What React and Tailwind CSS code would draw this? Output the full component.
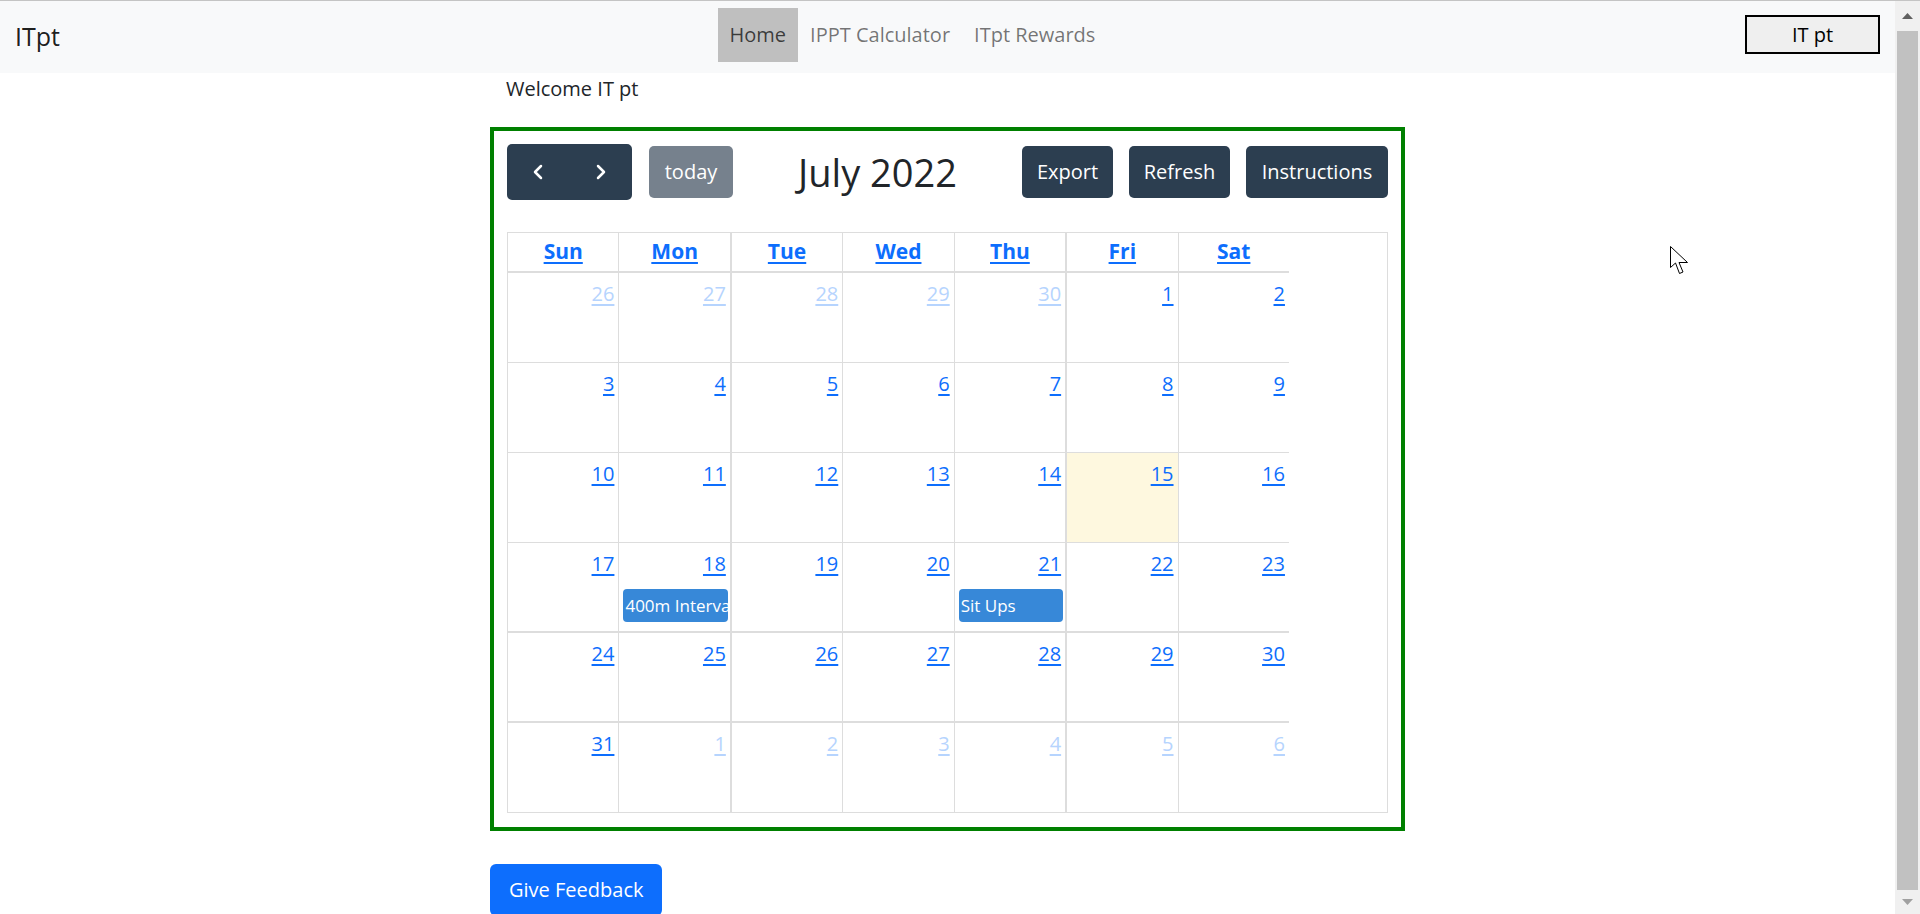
import { ChevronLeft, ChevronRight } from "lucide-react";

const weeks = [
  [[26, 1], [27, 1], [28, 1], [29, 1], [30, 1], [1], [2]],
  [[3], [4], [5], [6], [7], [8], [9]],
  [[10], [11], [12], [13], [14], [15], [16]],
  [[17], [18], [19], [20], [21], [22], [23]],
  [[24], [25], [26], [27], [28], [29], [30]],
  [[31], [1, 1], [2, 1], [3, 1], [4, 1], [5, 1], [6, 1]],
];

const days = ["Sun", "Mon", "Tue", "Wed", "Thu", "Fri", "Sat"];

const events = {
  "3-1": "400m Interval",
  "3-4": "Sit Ups",
};

const colBorder = [
  "border-r",
  "border-r-2",
  "border-r",
  "border-r",
  "border-r-2",
  "border-r",
  "",
];

const rowBorder = [
  "border-b h-[90px]",
  "border-b h-[90px]",
  "border-b h-[90px]",
  "border-b-2 h-[90px]",
  "border-b-2 h-[90px]",
  "h-[89px]",
];

function Calendar() {
  return (
    <div>
      {/* toolbar */}
      <div className="flex h-[56px] items-center justify-between">
        <div className="flex items-center gap-[17px]">
          <div className="flex h-[56px] w-[125px] overflow-hidden rounded-[5px] bg-[#2c3e50] text-white">
            <button className="flex flex-1 items-center justify-center">
              <ChevronLeft size={24} strokeWidth={2.5} />
            </button>
            <button className="flex flex-1 items-center justify-center">
              <ChevronRight size={24} strokeWidth={2.5} />
            </button>
          </div>
          <button className="h-[52px] w-[84px] rounded-[5px] bg-[#76818d] text-[20px] text-white">
            today
          </button>
        </div>
        <h2 className="text-[38px] font-medium text-[#212529]">July 2022</h2>
        <div className="flex items-center gap-[16px]">
          <button className="h-[52px] w-[91px] rounded-[5px] bg-[#2c3e50] text-[20px] text-white">
            Export
          </button>
          <button className="h-[52px] w-[101px] rounded-[5px] bg-[#2c3e50] text-[20px] text-white">
            Refresh
          </button>
          <button className="h-[52px] w-[142px] rounded-[5px] bg-[#2c3e50] text-[20px] text-white">
            Instructions
          </button>
        </div>
      </div>

      {/* grid */}
      <div className="mt-[32px] border border-[#ddd]">
        <div className="w-[781px]">
          <div className="flex h-[40px] border-b-2 border-[#ddd]">
            {days.map((d, i) => (
              <div
                key={d}
                className={`flex flex-1 items-center justify-center border-[#ddd] ${colBorder[i]}`}
              >
                <a className="text-[21px] font-bold text-[#0d6efd] underline underline-offset-[3px]">
                  {d}
                </a>
              </div>
            ))}
          </div>
          {weeks.map((week, r) => (
            <div key={r} className={`flex border-[#ddd] ${rowBorder[r]}`}>
              {week.map(([n, other], c) => {
                const ev = events[`${r}-${c}`];
                const today = r === 2 && c === 5;
                return (
                  <div
                    key={c}
                    className={`flex-1 overflow-hidden border-[#ddd] ${colBorder[c]} ${
                      today ? "bg-[#fef8df]" : ""
                    }`}
                  >
                    <div className="flex justify-end pr-[4px] pt-[6px]">
                      <a
                        className={`text-[20px] leading-[30px] underline underline-offset-[3px] ${
                          other ? "text-[#b6d4fe]" : "text-[#0d6efd]"
                        }`}
                      >
                        {n}
                      </a>
                    </div>
                    {ev && (
                      <div className="ml-[4px] mr-[2px] mt-[10px] flex h-[33px] items-center overflow-hidden whitespace-nowrap rounded-[4px] bg-[#3788d8] px-[2px] text-[17px] text-white">
                        {ev}
                      </div>
                    )}
                  </div>
                );
              })}
            </div>
          ))}
        </div>
      </div>
    </div>
  );
}

export default function App() {
  return (
    <div
      className="relative flex h-[914px] overflow-hidden border-t border-[#c4c4c4] bg-white text-[#212529]"
      style={{ fontFamily: '"Open Sans", "Noto Sans", sans-serif' }}
    >
      <div className="flex min-w-0 flex-1 flex-col">
        {/* navbar */}
        <nav className="flex h-[72px] shrink-0 items-center bg-[#f8f9fa] px-[15px]">
          <span className="mr-[20px] text-[25px] text-black/90">ITpt</span>
          <div className="flex flex-1 items-center justify-center self-start pt-[7px]">
            <a className="flex h-[54px] items-center bg-[#bfbfbf] px-[12px] text-[20px] text-black/70">
              Home
            </a>
            <a className="flex h-[54px] items-center px-[12px] text-[20px] text-black/55">
              IPPT Calculator
            </a>
            <a className="flex h-[54px] items-center px-[12px] text-[20px] text-black/55">
              ITpt Rewards
            </a>
          </div>
          <button className="mt-[14px] h-[39px] w-[135px] self-start border-2 border-black bg-[#efefef] text-[20px] text-black">
            IT pt
          </button>
        </nav>

        <div className="mx-auto w-[915px] shrink-0">
          <p className="pl-[16px] pt-[1px] text-[20px] leading-[30px]">Welcome IT pt</p>
          <div className="mt-[23px] border-4 border-[#008000] px-[13px] pb-[14px] pt-[13px]">
            <Calendar />
          </div>
          <button className="mt-[33px] h-[52px] rounded-[6px] bg-[#0d6efd] px-[19px] text-[20px] text-white">
            Give Feedback
          </button>
        </div>
      </div>

      {/* scrollbar */}
      <div className="flex w-[25px] flex-col bg-[#f0f0f0]">
        <div className="flex h-[30px] items-center justify-center">
          <svg width="11" height="6" viewBox="0 0 11 6">
            <path d="M5.5 0 L11 6 L0 6 Z" fill="#606060" />
          </svg>
        </div>
        <div className="mx-[2px] flex-1 bg-[#c1c1c1]" />
        <div className="flex h-[24px] items-center justify-center">
          <svg width="11" height="6" viewBox="0 0 11 6">
            <path d="M0 0 L11 0 L5.5 6 Z" fill="#a0a0a0" />
          </svg>
        </div>
      </div>

      {/* mouse pointer */}
      <svg
        className="absolute left-[1670px] top-[245px]"
        width="19"
        height="29"
        viewBox="0 0 19 29"
      >
        <path
          d="M0.5 0.5 L0.5 21.5 L5.5 17 L9.5 27.5 L13 26 L9 16.5 L17.5 16.5 Z"
          fill="#fff"
          stroke="#000"
          strokeWidth="1"
        />
      </svg>
    </div>
  );
}
